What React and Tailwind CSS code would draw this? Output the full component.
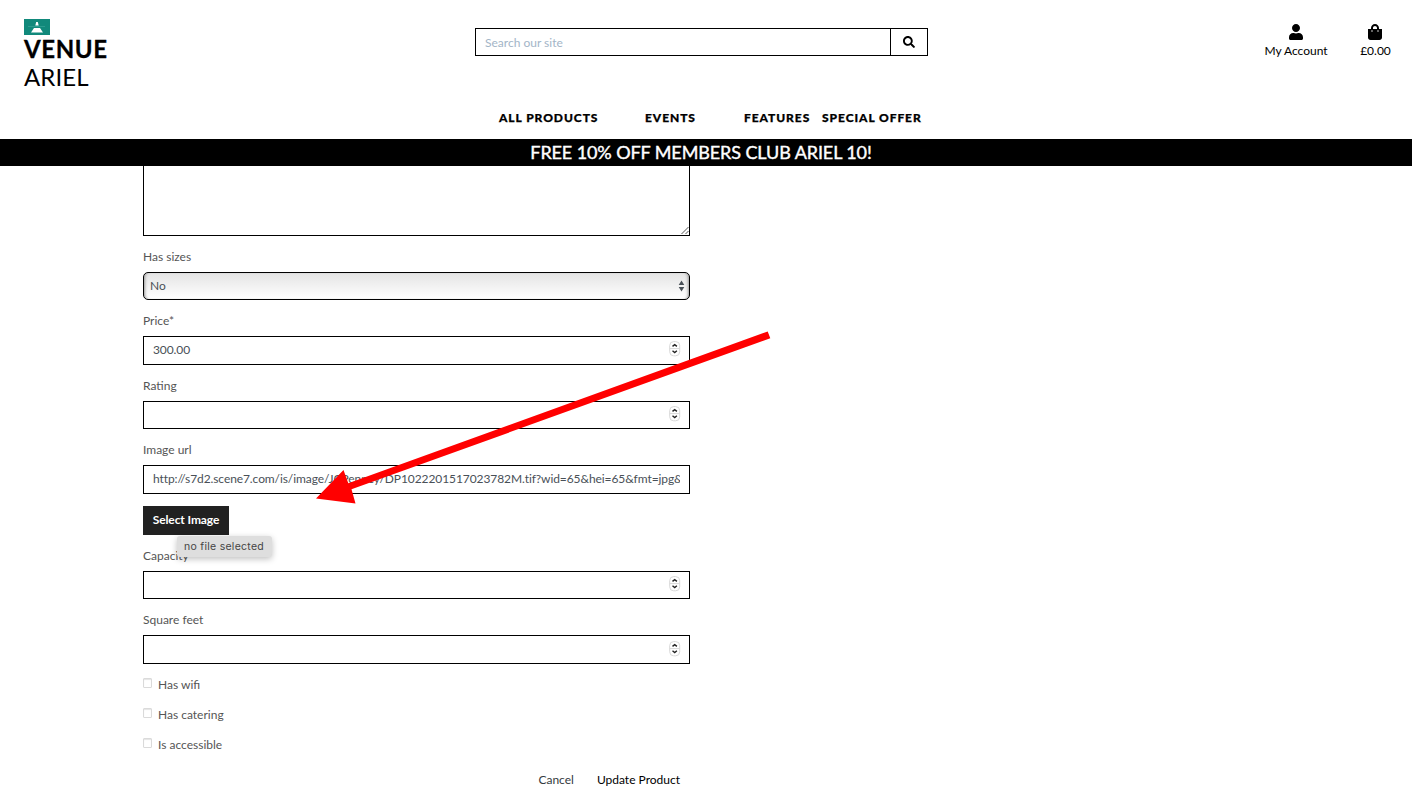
import { FaSearch, FaUser, FaShoppingBag } from 'react-icons/fa';

const Stepper = ({ lowered }) => (
  <svg className={`${lowered ? 'mt-[5px]' : 'mt-[4px]'} mr-[8px] h-[16px] w-[12px] shrink-0`} viewBox="0 0 12 16" fill="none">
    <rect x="0.7" y="0.6" width="10" height="14.2" rx="4" fill="#fff" stroke="#d8d8d8" />
    <path d="M0.7 7.6H10.7" stroke="#d8d8d8" />
    <path d="M3.5 5.4L5.7 3.6L7.9 5.4M3.5 9.8L5.7 11.6L7.9 9.8" stroke="#222" strokeWidth="1.4" />
  </svg>
);

const Label = ({ children }) => (
  <label className="mt-[12px] mb-[6px] block h-[18px] leading-[18px] text-[#555]">{children}</label>
);

const Field = ({ label, value, stepper, lowered, height = 'h-[28px]' }) => (
  <div>
    <Label>{label}</Label>
    <div className={`${height} flex border border-black bg-white text-[#495057]`}>
      <div className="mr-[9px] ml-[9px] flex-1 overflow-hidden leading-[26px] tracking-[-0.09px] whitespace-nowrap">{value}</div>
      {stepper && <Stepper lowered={lowered} />}
    </div>
  </div>
);

const Check = ({ children }) => (
  <div className="flex h-[30px] items-start leading-[18px] text-[#555]">
    <span className="mt-[2px] mr-[6px] h-[10px] w-[9px] rounded-[1px] border border-[#dadada] bg-white shadow-[inset_0_1px_1px_#e5e5e5]" />
    {children}
  </div>
);

export default function App() {
  return (
    <div className="relative h-[801px] w-[1412px] overflow-hidden bg-white font-[Lato,sans-serif] text-[12px] text-black">
      <header className="h-[139px]">
        <div className="flex h-[100px]">
          <div className="w-[475px] pt-[19px] pl-[24px]">
            <svg className="h-[16px] w-[26px]" viewBox="0 0 26 16">
              <rect width="26" height="16" fill="#11897b" />
              <path d="M4 7.5H21" stroke="#2c9c8e" strokeWidth="1" />
              <path d="M12.2 3H13.8L14.7 6.5H11.3ZM10 9H16L19 13.6H7Z" fill="#fff" />
            </svg>
            <div className="text-[24px] leading-[28px] font-bold tracking-[0.6px] [-webkit-text-stroke:0.3px_black]">VENUE</div>
            <div className="text-[24px] leading-[28px] tracking-[0.1px]">ARIEL</div>
          </div>
          <div className="mt-[28px] flex h-[28px] w-[453px] border border-black">
            <div className="flex-1 pl-[9px] leading-[27px] text-[#a3b5c7]">Search our site</div>
            <div className="flex w-[37px] justify-center border-l border-black pt-[7px]">
              <FaSearch size={12} />
            </div>
          </div>
          <div className="ml-[336px] flex w-[64px] flex-col items-center pt-[24px]">
            <FaUser size={16} />
            <span className="mt-[2px] leading-[18px] whitespace-nowrap">My Account</span>
          </div>
          <div className="ml-[32px] flex w-[31px] flex-col items-center pt-[24px]">
            <FaShoppingBag size={16} className="mr-[1px]" />
            <span className="mt-[2px] leading-[18px]">£0.00</span>
          </div>
        </div>
        <nav className="flex pt-[9px] pl-[499px] text-[12px] leading-[18px] font-black tracking-[0.93px] whitespace-nowrap [-webkit-text-stroke:0.25px_black]">
          <span className="w-[146px]">ALL PRODUCTS</span>
          <span className="w-[99px]">EVENTS</span>
          <span className="w-[78px]">FEATURES</span>
          <span>SPECIAL OFFER</span>
        </nav>
      </header>
      <div className="flex h-[27px] justify-center bg-black pr-[10px] text-[18px] leading-[27px] tracking-[-0.1px] text-white [-webkit-text-stroke:0.4px_white]">
        <span>FREE 10% OFF MEMBERS CLUB ARIEL 10!</span>
      </div>
      <main className="ml-[143px] w-[547px]">
        <div className="flex h-[70px] items-end justify-end border border-t-0 border-black">
          <svg className="h-[9px] w-[9px]" viewBox="0 0 9 9">
            <path d="M1.5 8L8.5 1M5.5 8L8.5 5" stroke="#444" strokeWidth="0.9" />
          </svg>
        </div>
        <Label>Has sizes</Label>
        <div className="flex h-[28px] items-center rounded-[5px] border border-black bg-linear-to-b from-[#e4e4e4] to-white pr-[4px] pl-[6px] text-[#495057] shadow-[inset_3px_0_3px_-2px_#999,inset_-3px_0_3px_-2px_#999]">
          <span className="flex-1">No</span>
          <svg className="h-[12px] w-[7px]" viewBox="0 0 7 12">
            <path d="M3.5 0.5L6.3 5H0.7ZM0.7 7H6.3L3.5 11.5Z" fill="#495057" />
          </svg>
        </div>
        <Field label="Price*" value="300.00" stepper height="h-[29px]" />
        <Field label="Rating" stepper />
        <Field
          label="Image url"
          value="http://s7d2.scene7.com/is/image/JCPenney/DP1022201517023782M.tif?wid=65&hei=65&fmt=jpg&"
          height="h-[29px]"
        />
        <div className="mt-[12px] h-[29px] w-[86px] bg-[#212121] text-center leading-[28px] font-bold tracking-[-0.1px] text-white">Select Image</div>
        <Field label="Capacity" stepper />
        <Field label="Square feet" stepper lowered height="h-[29px]" />
        <div className="mt-[12px]">
          <Check>Has wifi</Check>
          <Check>Has catering</Check>
          <Check>Is accessible</Check>
        </div>
        <div className="mt-[5px] flex justify-end pr-[10px] leading-[18px]">
          <span className="mr-[23px] text-[#343a40]">Cancel</span>
          <span>Update Product</span>
        </div>
      </main>
      <div className="absolute top-[536px] left-[177px] h-[21px] w-[95px] rounded-[3px] bg-[#dedede] pl-[7px] font-[Inter,sans-serif] text-[10.5px] leading-[21px] tracking-[0.27px] whitespace-nowrap text-[#444] shadow-[0_2px_6px_rgba(0,0,0,0.25)]">
        no file selected
      </div>
      <svg className="pointer-events-none absolute top-0 left-0 h-[801px] w-[1412px]" viewBox="0 0 1412 801">
        <path d="M767.7 331.5L770.3 338.3L351.5 489.3L355.5 503.5L316 498.5L343.5 470L348.3 483.3Z" fill="#f00" />
      </svg>
    </div>
  );
}
